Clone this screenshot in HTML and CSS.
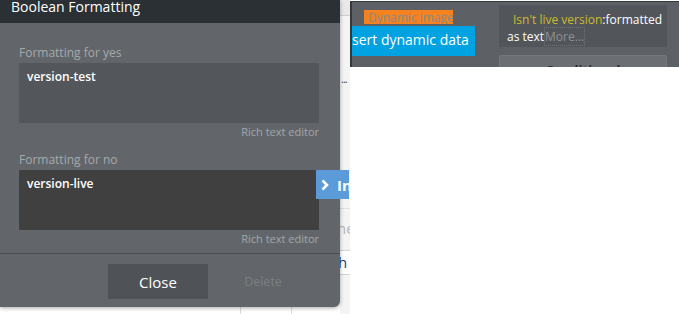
FILE: index.html
```html
<!DOCTYPE html>
<html lang="en">
<head>
    <meta charset="UTF-8">
    <meta name="viewport" content="width=device-width, initial-scale=1.0">
    <title>Boolean Formatting</title>
    <link rel="stylesheet" href="styles.css">
</head>
<body>
    <div class="app">
        <div class="canvas">
            <div class="table-row"><span class="table-cell"></span></div>
        </div>
        <div class="strip">
            <div class="strip-line"></div>
            <div class="strip-dots">...</div>
            <div class="strip-sep"></div>
            <div class="strip-hint">he</div>
            <div class="strip-input">h</div>
        </div>
        <div class="editor">
            <div class="editor-panel">
                <div class="element-col">
                    <div class="chip">Dynamic image</div>
                </div>
                <div class="prop-col">
                    <div class="expr-card"><span class="nowrap"><span class="expr-key">Isn't live version</span>:formatted</span> as text<span class="more">More...</span></div>
                    <div class="cond-card">Conditional</div>
                </div>
                <div class="insert-tip">sert dynamic data</div>
            </div>
        </div>
    </div>

    <div class="modal">
        <div class="modal-header">Boolean Formatting</div>
        <div class="modal-body">
            <div class="field-label">Formatting for yes</div>
            <div class="field-box">version-test</div>
            <div class="field-link">Rich text editor</div>

            <div class="field-label second">Formatting for no</div>
            <div class="field-box dark">version-live</div>
            <div class="field-link">Rich text editor</div>
        </div>
        <div class="modal-footer">
            <div class="btn close">Close</div>
            <div class="btn delete">Delete</div>
        </div>
    </div>

    <div class="insert-tab">
        <svg class="chevron" width="8" height="12" viewBox="0 0 8 12"><polyline points="1.5,1.5 6,6 1.5,10.5" fill="none" stroke="#fff" stroke-width="2.6"/></svg>
        <span>Insert</span>
    </div>
</body>
</html>
```

FILE: styles.css
```css
body { margin: 0; width: 679px; height: 314px; overflow: hidden; background: #fff; font-family: "Open Sans", "DejaVu Sans", sans-serif; }

.app { display: flex; height: 314px; }
.canvas { width: 340px; display: flex; flex-direction: column; justify-content: flex-end; }
.table-row { height: 8px; padding-left: 240px; }
.table-cell { display: block; width: 50px; height: 8px; border-left: 1px solid #dcdcdc; border-right: 1px solid #dcdcdc; }

.strip { width: 10px; background: #f4f4f4; overflow: hidden; position: relative; }
.strip-line { height: 15px; border-bottom: 1px solid #cfcfcf; background: #e9e9e9; }
.strip-dots { margin: 58px 0 0 1px; font-size: 11px; line-height: 10px; color: #444; letter-spacing: -1px; }
.strip-sep { margin-top: 124px; border-top: 1px solid #e0e0e0; }
.strip-hint { margin: 10px 0 0 -3px; font-size: 15px; line-height: 18px; color: #b5b5b5; }
.strip-input { margin: 13px 0 0 -3px; height: 23px; border: 1px solid #d4d4d4; border-right: none; font-size: 15px; line-height: 23px; color: #1f3c6e; background: #fff; }

.editor { flex: 1; padding-top: 1px; }
.editor-panel { position: relative; height: 66px; box-sizing: border-box; display: flex; background: #5d6165; border-top: 1px solid #34383b; border-left: 2px solid #34383b; overflow: hidden; }
.element-col { width: 147px; }
.chip { margin: 8px 0 0 12px; width: 89px; height: 14px; background: #f5821f; color: #8a8a8a; font-size: 12px; line-height: 16px; padding-left: 4px; box-sizing: border-box; overflow: hidden; white-space: nowrap; }
.prop-col { width: 168px; }
.expr-card { margin-top: 3px; height: 42px; box-sizing: border-box; padding: 6px 0 0 8px; background: #52565a; color: #fff; font-size: 12px; line-height: 17px; text-indent: 6px; overflow: hidden; }
.nowrap { white-space: nowrap; }
.expr-key { color: #cdbb2c; }
.more { color: #8e9195; border: 1px dotted #6f7376; }
.cond-card { margin-top: 8px; height: 26px; background: #6b6f73; border: 1px solid #74787b; border-radius: 2px; color: #2a2d30; font-size: 13px; font-weight: 700; line-height: 28px; text-align: center; }
.insert-tip { position: absolute; left: -1px; top: 24px; width: 124px; height: 30px; background: #00a2e1; color: #fff; font-size: 14px; line-height: 28px; padding-left: 1px; box-sizing: border-box; white-space: nowrap; }

.modal { position: absolute; left: 0; top: 0; width: 340px; height: 307px; background: #62666a; border-radius: 0 0 6px 0; box-shadow: 0 1px 4px rgba(0, 0, 0, 0.35); overflow: hidden; }
.modal-header { height: 23px; padding: 0 11px; background: #2a3033; color: #fff; font-size: 14px; line-height: 14px; }
.modal-body { padding: 22px 21px 7px 19px; }
.field-label { color: #a6a9ac; font-size: 12px; line-height: 16px; margin-bottom: 2px; }
.field-label.second { margin-top: 13px; }
.field-box { height: 60px; box-sizing: border-box; padding: 6px 8px; background: #53575b; color: #fff; font-size: 12px; font-weight: 600; line-height: 16px; }
.field-box.dark { background: #404040; }
.field-link { margin-top: 2px; text-align: right; color: #a3a6a9; font-size: 11px; line-height: 14px; }
.modal-footer { display: flex; gap: 5px; padding: 10px 0 0 108px; border-top: 1px solid #4b4f52; }
.btn { width: 100px; height: 35px; display: flex; align-items: center; justify-content: center; }
.close { background: #4f5357; color: #fff; font-size: 15px; }
.delete { color: #7a7e81; font-size: 12.5px; }

.insert-tab { position: absolute; left: 316px; top: 170px; width: 33px; height: 29px; background: #5b9bd9; overflow: hidden; display: flex; align-items: center; white-space: nowrap; }
.chevron { flex: none; margin-left: 5px; }
.insert-tab span { flex: none; margin-left: 8px; color: #fff; font-size: 15px; font-weight: 700; }
```
